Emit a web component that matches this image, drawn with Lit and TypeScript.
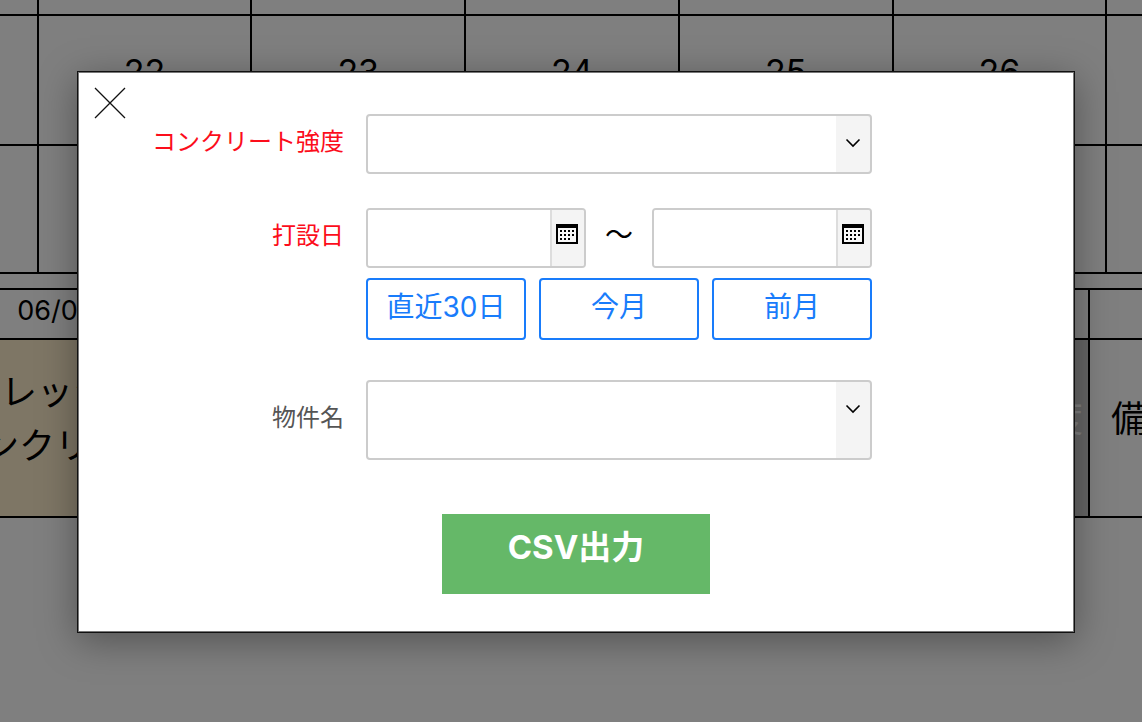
import { LitElement, html, css } from "lit";
import { customElement } from "lit/decorators.js";

const calendarIcon = html`
  <svg width="22" height="20" viewBox="0 0 22 20" aria-hidden="true" shape-rendering="crispEdges">
    <rect width="22" height="20" fill="#000" />
    <rect x="2" y="4" width="18" height="14" fill="#f8f8f8" />
    <path
      fill="#000"
      d="M4 6h2v2H4zM8 6h2v2H8zM12 6h2v2h-2zM16 6h2v2h-2zM4 10h2v2H4zM8 10h2v2H8zM12 10h2v2h-2zM16 10h2v2h-2zM4 14h2v2H4zM8 14h2v2H8zM12 14h2v2h-2z"
    />
  </svg>
`;

@customElement("calendar-page")
export class CalendarPage extends LitElement {
  static styles = css`
    :host {
      display: block;
      overflow: hidden;
      color: #000;
      font-family: Inter, "Noto Sans CJK JP", sans-serif;
    }
    table {
      border-spacing: 0;
      table-layout: fixed;
    }
    td,
    th {
      box-sizing: border-box;
      border: 0 solid #000;
      border-width: 0 2px 2px 0;
      padding: 0;
      text-align: center;
      font-weight: 400;
      font-size: 36px;
      line-height: 54px;
    }
    .month {
      width: calc(100% + 354px);
      margin-left: -175px;
    }
    .previous td {
      height: 16px;
    }
    .days td {
      height: 130px;
      padding-bottom: 16px;
      font-size: 34px;
    }
    .entries td {
      height: 128px;
    }
    .plan {
      width: calc(100% + 130px);
      margin: 14px 0 0 -66px;
    }
    .plan th {
      height: 52px;
      border-top-width: 2px;
      font-size: 27px;
      line-height: 36px;
      padding-bottom: 6px;
    }
    .plan td {
      height: 178px;
      padding-bottom: 18px;
    }
    .kind {
      width: 240px;
    }
    td.kind {
      padding-left: 4px;
      background: #fdeccb;
    }
    .strength {
      width: 84px;
    }
    td.strength {
      background: #ccc;
      color: #fff;
    }
    .note {
      width: 116px;
    }
  `;

  render() {
    const days = [21, 22, 23, 24, 25, 26, 27];
    return html`
      <table class="month">
        <tbody>
          <tr class="previous">${days.map(() => html`<td></td>`)}</tr>
          <tr class="days">${days.map((day) => html`<td>${day}</td>`)}</tr>
          <tr class="entries">${days.map(() => html`<td></td>`)}</tr>
        </tbody>
      </table>
      <table class="plan">
        <thead>
          <tr>
            <th class="kind">06/01</th>
            <th></th>
            <th class="strength"></th>
            <th class="note"></th>
          </tr>
        </thead>
        <tbody>
          <tr>
            <td class="kind">フレッシュ<br />コンクリート</td>
            <td></td>
            <td class="strength">強度</td>
            <td class="note">備考</td>
          </tr>
        </tbody>
      </table>
    `;
  }
}

@customElement("export-dialog")
export class ExportDialog extends LitElement {
  static styles = css`
    :host {
      display: block;
      box-sizing: border-box;
      border: 1px solid #111;
      outline: 1px solid #777;
      outline-offset: -2px;
      background: #fff;
      box-shadow: 0 8px 36px rgba(0, 0, 0, 0.35);
      font-family: Inter, "Noto Sans CJK JP", sans-serif;
    }
    button,
    input,
    select {
      box-sizing: border-box;
      margin: 0;
      font-family: inherit;
    }
    .sheet {
      display: grid;
      grid-template-columns: 64px 1fr;
      padding-right: 202px;
    }
    .close {
      width: 32px;
      height: 32px;
      margin: 15px 0 0 16px;
      padding: 0;
      border: 0;
      background: none;
      line-height: 0;
    }
    form {
      display: grid;
      grid-template-columns: 192px 1fr;
      column-gap: 22px;
      padding: 42px 0 38px 10px;
    }
    .label {
      text-align: right;
      white-space: nowrap;
      font-size: 24px;
      line-height: 36px;
      padding-top: 10px;
      color: #555;
    }
    .required {
      color: #fc0d1b;
    }
    .tall {
      padding-top: 20px;
    }
    .select {
      display: grid;
      grid-template-columns: 1fr 36px;
      height: 60px;
      margin-bottom: 34px;
    }
    .select.large {
      height: 80px;
      margin-bottom: 54px;
    }
    select {
      grid-area: 1 / 1 / 2 / 3;
      width: 100%;
      height: 100%;
      appearance: none;
      border: 2px solid #ccc;
      border-radius: 4px;
      background: linear-gradient(#f4f4f4, #f4f4f4) right / 34px 100% no-repeat #fff;
      padding: 0 44px 0 10px;
      font-size: 24px;
    }
    .chevron {
      grid-area: 1 / 2 / 2 / 3;
      padding: 24px 0 0 9px;
      pointer-events: none;
      z-index: 1;
    }
    .range {
      display: flex;
      justify-content: space-between;
      align-items: center;
      margin-bottom: 10px;
    }
    .date {
      box-sizing: border-box;
      display: flex;
      flex: 0 1 220px;
      height: 60px;
      border: 2px solid #ccc;
      border-radius: 4px;
      overflow: hidden;
    }
    .date input {
      flex: 1;
      min-width: 0;
      border: 0;
      padding: 0 10px;
      font-size: 24px;
      background: #fff;
    }
    .date button {
      display: flex;
      justify-content: flex-start;
      align-items: flex-start;
      width: 34px;
      padding: 14px 4px;
      border: 0;
      border-left: 2px solid #ddd;
      background: #f4f4f4;
    }
    .tilde {
      font-family: "Noto Sans CJK JP", sans-serif;
      font-size: 28px;
      line-height: 36px;
      padding-bottom: 10px;
      color: #000;
    }
    .presets {
      display: flex;
      justify-content: space-between;
      margin-bottom: 40px;
    }
    .preset {
      flex: 0 1 160px;
      height: 62px;
      padding: 0 0 4px;
      border: 2px solid #197cfb;
      border-radius: 4px;
      background: #fff;
      color: #197cfb;
      font-size: 28px;
      line-height: 40px;
      white-space: nowrap;
    }
    .actions {
      grid-column: 1 / 3;
      padding-left: 290px;
    }
    .submit {
      width: 268px;
      height: 80px;
      padding: 0 0 14px;
      border: 0;
      background: #65b868;
      color: #fff;
      font-size: 33px;
      line-height: 48px;
      font-weight: 700;
    }
  `;

  private chevron() {
    return html`
      <svg class="chevron" width="16" height="10" viewBox="0 0 16 10" aria-hidden="true">
        <path d="M1.5 1.5L8 8L14.5 1.5" fill="none" stroke="#000" stroke-width="1.6" />
      </svg>
    `;
  }

  render() {
    return html`
      <div class="sheet">
        <button class="close" type="button" aria-label="閉じる">
          <svg width="32" height="32" viewBox="0 0 32 32" aria-hidden="true">
            <path d="M1 1L31 31M31 1L1 31" fill="none" stroke="#111" stroke-width="1.3" />
          </svg>
        </button>
        <form @submit=${(event: Event) => event.preventDefault()}>
          <label class="label required" for="strength">コンクリート強度</label>
          <div class="select">
            <select id="strength"><option></option></select>
            ${this.chevron()}
          </div>

          <label class="label required" for="from">打設日</label>
          <div>
            <div class="range">
              <div class="date">
                <input id="from" type="text" />
                <button type="button" aria-label="開始日を選択">${calendarIcon}</button>
              </div>
              <span class="tilde">〜</span>
              <div class="date">
                <input id="to" type="text" aria-label="打設日の終了日" />
                <button type="button" aria-label="終了日を選択">${calendarIcon}</button>
              </div>
            </div>
            <div class="presets">
              <button class="preset" type="button">直近30日</button>
              <button class="preset" type="button">今月</button>
              <button class="preset" type="button">前月</button>
            </div>
          </div>

          <label class="label tall" for="project">物件名</label>
          <div class="select large">
            <select id="project"><option></option></select>
            ${this.chevron()}
          </div>

          <div class="actions">
            <button class="submit" type="submit">CSV出力</button>
          </div>
        </form>
      </div>
    `;
  }
}

@customElement("app-root")
export class AppRoot extends LitElement {
  static styles = css`
    :host {
      display: block;
      position: relative;
      min-height: 100vh;
      background: #fff;
      overflow: hidden;
    }
    .backdrop {
      position: absolute;
      inset: 0;
      padding: 71px 67px 40px 77px;
      background: rgba(0, 0, 0, 0.5);
    }
  `;

  render() {
    return html`
      <calendar-page></calendar-page>
      <div class="backdrop">
        <export-dialog role="dialog" aria-modal="true" aria-label="CSV出力"></export-dialog>
      </div>
    `;
  }
}
